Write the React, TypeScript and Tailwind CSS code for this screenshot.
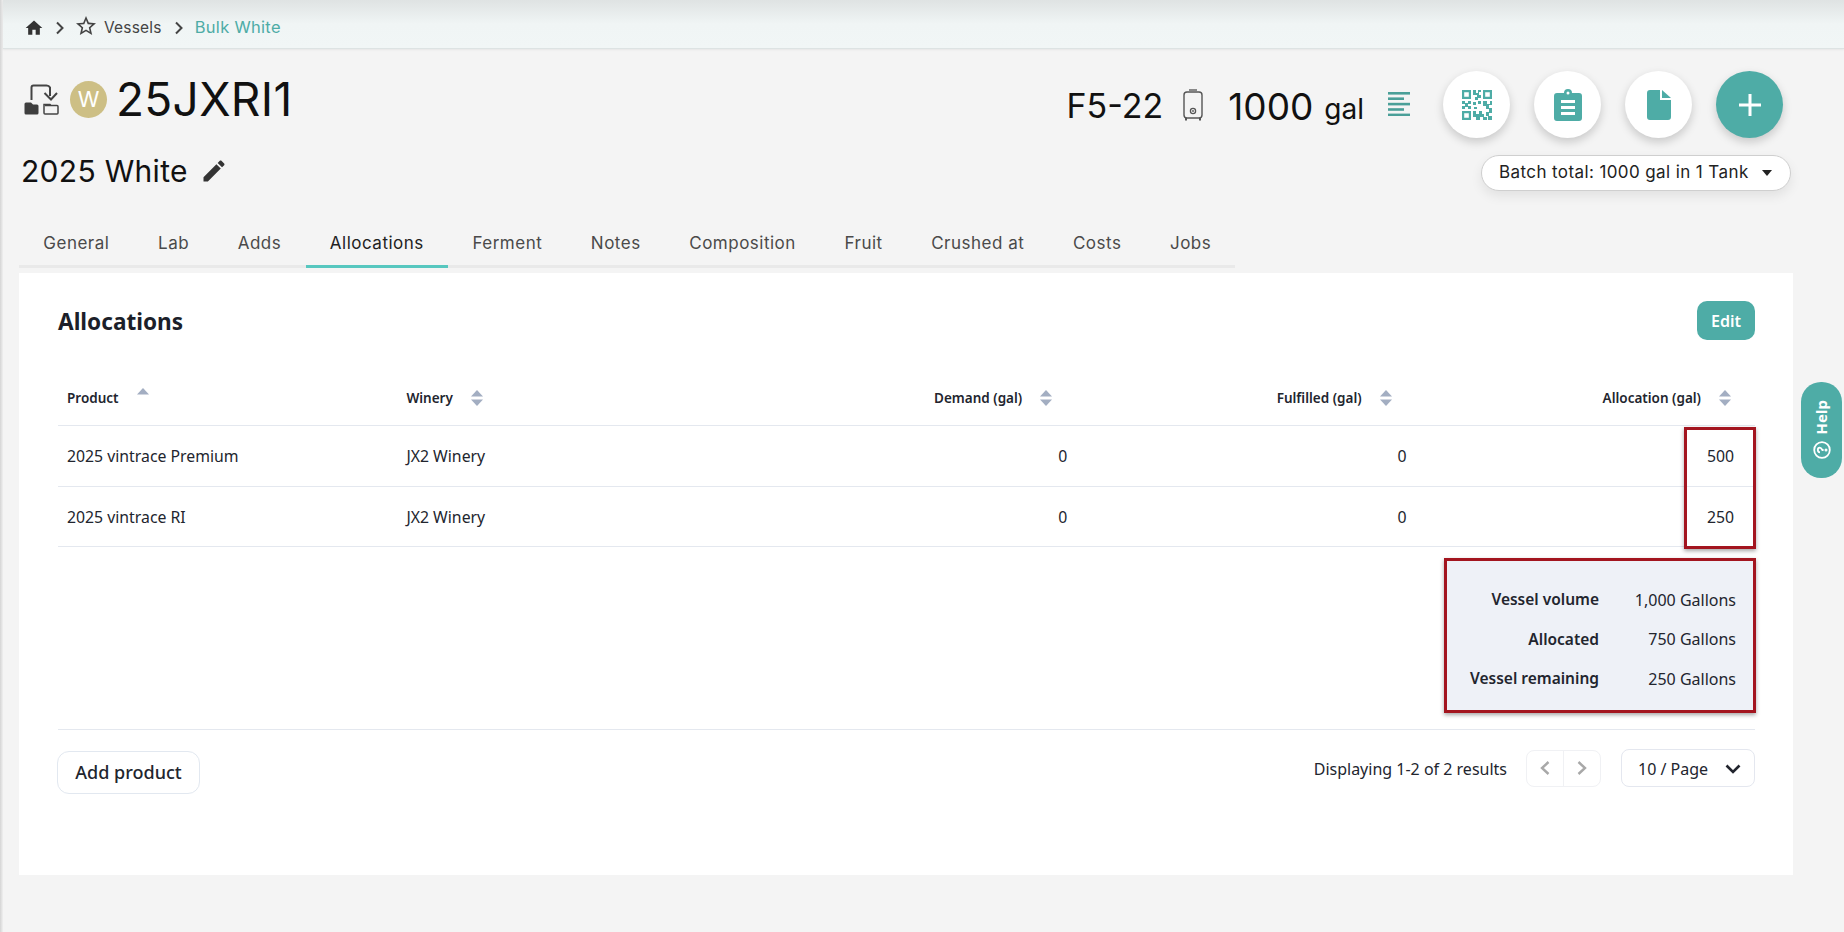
import React from "react";

const M = "font-['Inter','Liberation_Sans',sans-serif]";
const S = "font-['Noto_Sans','Open_Sans',sans-serif]";

function SortIcon({ upOnly = false }: { upOnly?: boolean }) {
  return (
    <svg width="12" height="16" viewBox="0 0 12 16" className="shrink-0">
      <path d="M6 0 L12 6.5 H0 Z" fill="#a3aec2" />
      {!upOnly && <path d="M6 16 L12 9.5 H0 Z" fill="#a3aec2" />}
    </svg>
  );
}

function Transfer() {
  return (
    <svg width="35" height="31" viewBox="0 0 35 31" fill="none" className="shrink-0">
      <path d="M7.5 16 V3.5 Q7.5 1.5 9.5 1.5 H22.5 Q25 1.5 26 3.5 V12" stroke="#444" strokeWidth="2" />
      <path d="M20.5 9 L27 15.5 L33 9" stroke="#444" strokeWidth="2" />
      <path d="M0.5 20 Q0.5 18.5 2 18.5 H7 L9 20.5 H13 Q14.5 20.5 14.5 22 V29 Q14.5 30.5 13 30.5 H2 Q0.5 30.5 0.5 29 Z" fill="#3e3e3e" />
      <path d="M21 21.5 H33 Q34 21.5 34 22.5 V29 Q34 30 33 30 H21 Q20 30 20 29 V20.5 H26 L27 21.5" stroke="#444" strokeWidth="1.5" />
    </svg>
  );
}

function Tank() {
  return (
    <svg width="20" height="32" viewBox="0 0 20 32" fill="none" className="shrink-0">
      <path d="M6 1 H14" stroke="#666" strokeWidth="1.5" />
      <rect x="1" y="3" width="18" height="26" rx="3" stroke="#555" strokeWidth="1.4" />
      <circle cx="10" cy="22" r="2.6" stroke="#555" strokeWidth="1.3" />
      <circle cx="10" cy="22" r="0.9" fill="#555" />
      <path d="M3 29 V31.5 M17 29 V31.5" stroke="#555" strokeWidth="2" />
    </svg>
  );
}

function Lines() {
  return (
    <svg width="22" height="24" viewBox="0 0 22 24" className="shrink-0">
      <rect x="0" y="0" width="22" height="2.6" fill="#4a9f98" />
      <rect x="0" y="5.4" width="16" height="2.6" fill="#4a9f98" />
      <rect x="0" y="10.8" width="22" height="2.6" fill="#4a9f98" />
      <rect x="0" y="16.2" width="16" height="2.6" fill="#4a9f98" />
      <rect x="0" y="21.6" width="22" height="2.6" fill="#4a9f98" />
    </svg>
  );
}

function Qr() {
  const c = "#4eaca6";
  return (
    <svg width="30" height="30" viewBox="0 0 30 30" fill={c}>
      <path fillRule="evenodd" d="M0 0H9V9H0ZM2.2 2.2V6.8H6.8V2.2Z" />
      <path fillRule="evenodd" d="M21 0H30V9H21ZM23.2 2.2V6.8H27.8V2.2Z" />
      <path fillRule="evenodd" d="M0 21H9V30H0ZM2.2 23.2V27.8H6.8V23.2Z" />
      <path d="M11 0H14V3H16V0H19V2H17V5H19V8H16V10H13V7H15V5H11Z" />
      <path d="M0 11H3V13H6V11H9V14H6V16H9V19H6V17H3V19H0V16H3V14H0Z" />
      <path d="M11 12H14V15H11ZM16 11H19V14H16ZM12 17H15V19H12Z" />
      <path d="M21 11H25V14H28V11H30V15H27V18H30V23H27V26H30V30H26V26H24V22H27V19H24V16H21Z" />
      <path d="M11 21H14V24H17V21H20V24H22V27H25V30H21V27H18V30H14V27H11Z" />
    </svg>
  );
}

function Clipboard() {
  return (
    <svg width="28" height="32" viewBox="0 0 28 32">
      <path
        fill="#4eaca6"
        fillRule="evenodd"
        d="M10 4 Q10 0 14 0 Q18 0 18 4 H25 Q28 4 28 7 V29 Q28 32 25 32 H3 Q0 32 0 29 V7 Q0 4 3 4 Z M12.5 4 A1.5 1.5 0 1 0 15.5 4 A1.5 1.5 0 1 0 12.5 4 Z M7 11 V14 H21 V11 Z M7 17 V20 H21 V17 Z M7 23 V26 H21 V23 Z"
      />
    </svg>
  );
}

function DocIcon() {
  return (
    <svg width="24" height="30" viewBox="0 0 24 30">
      <path fill="#4eaca6" d="M3 0 H13 V10 H24 V27 Q24 30 21 30 H3 Q0 30 0 27 V3 Q0 0 3 0 Z M15 0 L24 8 H15 Z" />
    </svg>
  );
}

function RoundBtn({ children, teal = false }: { children: React.ReactNode; teal?: boolean }) {
  return (
    <div
      className={`flex h-[67px] w-[67px] shrink-0 items-center justify-center rounded-full shadow-[0_4px_10px_rgba(0,0,0,0.18)] ${
        teal ? "bg-[#4eaca6]" : "bg-white"
      }`}
    >
      {children}
    </div>
  );
}

const tabs = ["General", "Lab", "Adds", "Allocations", "Ferment", "Notes", "Composition", "Fruit", "Crushed at", "Costs", "Jobs"];

const rows = [
  { p: "2025 vintrace Premium", a: "500" },
  { p: "2025 vintrace RI", a: "250" },
];

const summary = [
  ["Vessel volume", "1,000 Gallons"],
  ["Allocated", "750 Gallons"],
  ["Vessel remaining", "250 Gallons"],
];

export default function App() {
  return (
    <div className={`relative flex h-[932px] w-[1844px] overflow-hidden bg-[#f4f4f4] ${S}`}>
      <div className="w-[3px] shrink-0 bg-gradient-to-r from-[#d4d4d4] to-[#f0f0f0]" />
      <div className="flex min-w-0 flex-1 flex-col">
        {/* Breadcrumb */}
        <div
          className={`flex h-[49px] shrink-0 items-center border-b border-[#dde3e3] bg-gradient-to-b from-[#dfe3e3] via-[#f0f5f5] to-[#f1f6f6] pl-[21px] pt-[7px] text-[#444] shadow-[0_1px_2px_rgba(0,0,0,0.06)] ${M}`}
        >
          <svg width="20" height="20" viewBox="0 0 24 24" fill="#333">
            <path d="M10 20v-6h4v6h5v-8h3L12 3 2 12h3v8z" />
          </svg>
          <svg width="10" height="14" viewBox="0 0 10 14" fill="none" stroke="#444" strokeWidth="2" className="ml-[11px]">
            <path d="M2 1.5 L7.5 7 L2 12.5" />
          </svg>
          <svg width="24" height="24" viewBox="0 0 24 24" fill="#444" className="ml-[9px] mb-[3px]">
            <path d="M22 9.24l-7.19-.62L12 2 9.19 8.63 2 9.24l5.46 4.73L5.82 21 12 17.27 18.18 21l-1.63-7.03L22 9.24zM12 15.4l-3.76 2.27 1-4.28-3.32-2.88 4.38-.38L12 6.1l1.71 4.04 4.38.38-3.32 2.88 1 4.28L12 15.4z" />
          </svg>
          <span className="ml-[6px] text-[15.5px] tracking-[0.2px]">Vessels</span>
          <svg width="10" height="14" viewBox="0 0 10 14" fill="none" stroke="#444" strokeWidth="2" className="ml-[12px]">
            <path d="M2 1.5 L7.5 7 L2 12.5" />
          </svg>
          <span className="ml-[11px] text-[16.5px] tracking-[0.3px] text-[#4eaca6]">Bulk White</span>
        </div>

        {/* Header */}
        <div className="flex shrink-0 justify-between pl-[19px] pr-[61px]">
          <div className="flex flex-col">
            <div className="mt-[28px] flex h-[44px] items-center">
              <div className="ml-[2px]"><Transfer /></div>
              <div className={`ml-[11px] flex h-[37px] w-[37px] items-center justify-center rounded-full bg-[#cdbf85] text-[22px] text-white ${M}`}>W</div>
              <span className={`ml-[9px] text-[46px] leading-none tracking-[0.3px] text-[#111] ${M}`}>25JXRI1</span>
            </div>
            <div className="ml-[-1px] mt-[35px] flex h-[30px] items-center">
              <span className={`text-[30px] leading-none tracking-[0.3px] text-[#111] ${M}`}>2025 White</span>
              <svg width="28" height="28" viewBox="0 0 24 24" fill="#333" className="ml-[12px]">
                <path d="M3 17.25V21h3.75L17.81 9.94l-3.75-3.75L3 17.25zM20.71 7.04c.39-.39.39-1.02 0-1.41l-2.34-2.34c-.39-.39-1.02-.39-1.41 0l-1.83 1.83 3.75 3.75 1.83-1.83z" />
              </svg>
            </div>
          </div>
          <div className="flex flex-col items-end">
            <div className={`mt-[22px] flex h-[67px] items-center text-[#111] ${M}`}>
              <span className="mt-[3px] text-[34px] leading-none">F5-22</span>
              <div className="ml-[20px]"><Tank /></div>
              <span className="ml-[25px] mt-[3px] text-[37px] leading-none">1000</span>
              <span className="ml-[11px] mt-[9px] text-[28px] leading-none">gal</span>
              <div className="ml-[24px] mb-[2px]"><Lines /></div>
              <div className="ml-[33px] flex gap-[24px]">
                <RoundBtn><Qr /></RoundBtn>
                <RoundBtn><Clipboard /></RoundBtn>
                <RoundBtn><DocIcon /></RoundBtn>
                <RoundBtn teal>
                  <svg width="26" height="26" viewBox="0 0 26 26" stroke="#fff" strokeWidth="3">
                    <path d="M13 2V24M2 13H24" />
                  </svg>
                </RoundBtn>
              </div>
            </div>
            <div className={`mr-[-8px] mt-[17px] flex h-[36px] w-[310px] items-center rounded-full border border-[#cfcfcf] bg-white pl-[17px] text-[17px] tracking-[0.4px] text-[#222] shadow-[0_5px_12px_rgba(0,0,0,0.08)] ${M}`}>
              Batch total: 1000 gal in 1 Tank
              <svg width="10" height="6" viewBox="0 0 10 6" className="ml-[13px]" fill="#222">
                <path d="M0 0H10L5 6Z" />
              </svg>
            </div>
          </div>
        </div>

        {/* Tabs */}
        <div className={`mt-[31px] ml-[16px] flex h-[46px] w-[1216px] shrink-0 border-b-[3px] border-[#e9e9e9] text-[17px] ${M}`}>
          {tabs.map((t) => (
            <div
              key={t}
              className={`mb-[-3px] flex shrink-0 items-center whitespace-nowrap border-b-[3px] px-[24.3px] tracking-[0.5px] ${
                t === "Allocations" ? "border-[#57c7bf] text-[#222]" : "border-transparent text-[#4a4a4a]"
              }`}
            >
              {t}
            </div>
          ))}
        </div>

        {/* Card */}
        <div className="ml-[16px] mt-[5px] flex h-[602px] w-[1774px] flex-col bg-white pl-[39px] pr-[38px] text-[#22252e]">
          <div className="mt-[28px] flex h-[39px] items-center justify-between">
            <h1 className="pt-[4px] text-[22.6px] font-bold leading-none text-[#1c1f2a]">Allocations</h1>
            <button className="h-[39px] w-[58px] rounded-[10px] bg-[#4eaca6] text-[16px] font-semibold text-white">Edit</button>
          </div>

          <div className="relative mt-[46px]">
            <div className="grid h-[40px] grid-cols-5 border-b border-[#e4e8ef] pt-[1px] text-[13.5px] font-semibold">
              <div className="flex items-start gap-[18px] pl-[9px]">
                <span className="leading-[22px]">Product</span>
                <div className="mt-[1px]"><SortIcon upOnly /></div>
              </div>
              <div className="flex items-start gap-[18px] pl-[9px]">
                <span className="leading-[22px]">Winery</span>
                <div className="mt-[3px]"><SortIcon /></div>
              </div>
              {["Demand (gal)", "Fulfilled (gal)", "Allocation (gal)"].map((h) => (
                <div key={h} className="flex items-start justify-end gap-[18px] pr-[24px]">
                  <span className="leading-[22px]">{h}</span>
                  <div className="mt-[3px]"><SortIcon /></div>
                </div>
              ))}
            </div>
            {rows.map((r) => (
              <div key={r.p} className="grid h-[60.5px] grid-cols-5 items-center border-b border-[#e4e8ef] pt-[3px] text-[15.8px]">
                <div className="pl-[9px]">{r.p}</div>
                <div className="pl-[9px]">JX2 Winery</div>
                <div className="pr-[9px] text-right">0</div>
                <div className="pr-[9px] text-right">0</div>
                <div className="pr-[21px] text-right">{r.a}</div>
              </div>
            ))}
            {/* Red annotation rectangle over the last column */}
            <div className="absolute right-[-1px] top-[41px] h-[122px] w-[72px] border-[3px] border-[#a3151f] shadow-[0_2px_4px_rgba(0,0,0,0.35)]" />
          </div>

          <div className="mt-[11px] flex justify-end">
            <div className="mr-[-1px] h-[155px] w-[312px] border-[3px] border-[#a3151f] bg-[#eef1f7] pr-[17px] pt-[19px] shadow-[0_2px_4px_rgba(0,0,0,0.35)]">
              {summary.map(([k, v]) => (
                <div key={k} className="grid h-[39.5px] grid-cols-[1fr_137px] items-center text-[16px]">
                  <span className="text-right text-[15.5px] font-semibold">{k}</span>
                  <span className="text-right">{v}</span>
                </div>
              ))}
            </div>
          </div>

          <div className="mt-[16px] border-t border-[#e4e8ef]" />

          <div className="mt-[20px] flex items-start justify-between">
            <button className="ml-[-1px] mt-[1px] h-[43px] w-[143px] rounded-[12px] border border-[#e2e8f0] text-[18px] font-medium">Add product</button>
            <div className="mt-[-1px] flex items-center">
              <span className="pt-[2px] text-[16px]">Displaying 1-2 of 2 results</span>
              <div className="ml-[19px] flex h-[37px] w-[75px] rounded-[8px] border border-[#f0f1f4]">
                <div className="flex flex-1 items-center justify-center border-r border-[#f0f1f4]">
                  <svg width="12" height="16" viewBox="0 0 12 16" fill="none" stroke="#a8a8a8" strokeWidth="2.4"><path d="M9.5 2 L3 8 L9.5 14" /></svg>
                </div>
                <div className="flex flex-1 items-center justify-center">
                  <svg width="12" height="16" viewBox="0 0 12 16" fill="none" stroke="#a8a8a8" strokeWidth="2.4"><path d="M2.5 2 L9 8 L2.5 14" /></svg>
                </div>
              </div>
              <div className="ml-[20px] flex h-[38px] w-[134px] items-center rounded-[8px] border border-[#e4e7ef] pl-[16px] pt-[1px] text-[16px]">
                10 / Page
                <svg width="16" height="10" viewBox="0 0 16 10" fill="none" stroke="#22252e" strokeWidth="2.6" className="ml-[17px]"><path d="M1.5 1.5 L8 8 L14.5 1.5" /></svg>
              </div>
            </div>
          </div>
        </div>
      </div>

      {/* Help tab */}
      <div className="absolute left-[1801px] top-[382px] flex h-[96px] w-[41px] flex-col items-center justify-end rounded-[20px] bg-[#4eaca6] pb-[19px] text-white">
        <div className="mb-[7px] flex items-center justify-center [writing-mode:vertical-rl] rotate-180 text-[15px] font-bold leading-none">Help</div>
        <svg width="18" height="18" viewBox="0 0 18 18" fill="none" stroke="#fff" strokeWidth="1.8" className="-rotate-90">
          <circle cx="9" cy="9" r="7.8" />
          <path d="M6.6 7 Q6.8 4.8 9 4.8 Q11.4 4.8 11.4 6.8 Q11.4 8 9 9.4 V10.6" />
          <circle cx="9" cy="13" r="0.6" fill="#fff" />
        </svg>
      </div>
    </div>
  );
}
